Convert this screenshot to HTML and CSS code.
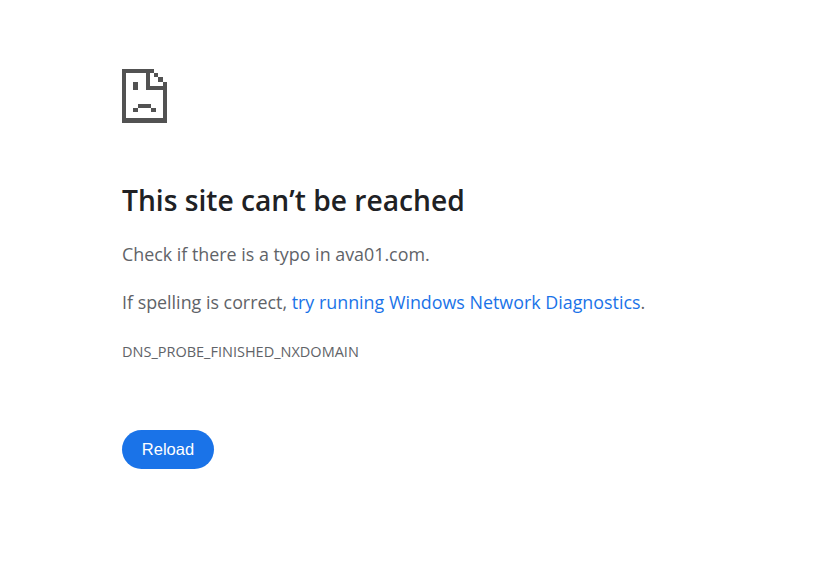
FILE: index.html
```html
<!DOCTYPE html>
<html>

<head>
    <title>ava01.com</title>
    <link rel="stylesheet" href="styles.css">
</head>

<body>
    <div class="errorPage">
        <svg class="errorIcon" width="45" height="54" viewBox="0 0 45 54" shape-rendering="crispEdges">
            <!-- page outline with the fold cut out -->
            <path fill="#525252" d="M0 0H32V4H28V17H41V13H45V54H0ZM4 4V49H41V21H24V4Z"/>
            <!-- folded corner steps -->
            <rect fill="#525252" x="32" y="4" width="4" height="4"/>
            <rect fill="#525252" x="36" y="8" width="5" height="5"/>
            <!-- eye -->
            <rect fill="#525252" x="11" y="13" width="5" height="8"/>
            <!-- mouth -->
            <rect fill="#525252" x="16" y="35" width="13" height="4"/>
            <rect fill="#525252" x="11" y="39" width="5" height="4"/>
            <rect fill="#525252" x="29" y="39" width="5" height="4"/>
        </svg>

        <h1 class="errorTitle">This site can’t be reached</h1>
        <p class="errorText">Check if there is a typo in ava01.com.</p>
        <p class="errorText">If spelling is correct, <a class="errorLink" href="#">try running Windows Network Diagnostics</a>.</p>
        <div class="errorCode">DNS_PROBE_FINISHED_NXDOMAIN</div>
        <button type="button" class="reloadButton">Reload</button>
    </div>
</body>

</html>
```

FILE: styles.css
```css
html {
    font-family: "Open Sans", "Noto Sans", sans-serif;
}

body {
    margin: 0;
    background-color: #fff;
}

.errorPage {
    display: flex;
    flex-direction: column;
    align-items: flex-start;
    padding: 69px 0 0 122px;
}

.errorIcon {
    display: block;
    margin-bottom: 57px;
}

.errorTitle {
    margin: 0 0 20px;
    color: #202124;
    font-size: 28.2px;
    font-weight: 600;
    line-height: 40px;
}

.errorText {
    margin: 0 0 20px;
    color: #5f6368;
    font-size: 17.88px;
    line-height: 28px;
}

.errorLink {
    color: #1a73e8;
    text-decoration: none;
}

.errorCode {
    margin-top: 6px;
    color: #5f6368;
    font-size: 14.5px;
    line-height: 20px;
}

.reloadButton {
    margin-top: 68px;
    width: 92px;
    height: 39px;
    border: 0;
    border-radius: 20px;
    background-color: #1a73e8;
    color: #fff;
    font-family: "Liberation Sans", sans-serif;
    font-size: 16.5px;
}
```
